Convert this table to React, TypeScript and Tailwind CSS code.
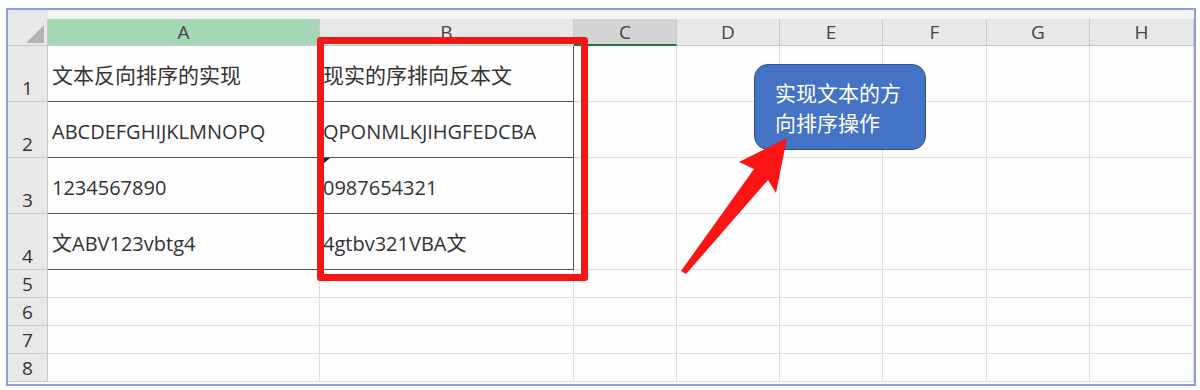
import React from 'react'

const cols = ['A', 'B', 'C', 'D', 'E', 'F', 'G', 'H']

const data: Record<number, [string, string]> = {
  1: ['文本反向排序的实现', '现实的序排向反本文'],
  2: ['ABCDEFGHIJKLMNOPQ', 'QPONMLKJIHGFEDCBA'],
  3: ['1234567890', '0987654321'],
  4: ['文ABV123vbtg4', '4gtbv321VBA文'],
}

const cellFont = { fontFamily: '"Open Sans", "Noto Sans CJK SC", sans-serif' }
const labelFont = { fontFamily: '"Open Sans", Arial, sans-serif' }

function headerClass(c: string) {
  if (c === 'A') return 'bg-[#a3d7b6] border-r border-b border-[#c9c9c9]'
  if (c === 'C') return 'bg-[#d4d4d4] border-r border-[#c9c9c9] border-b-2 border-b-[#217346]'
  return 'bg-[#e8e8e8] border-r border-b border-[#c9c9c9]'
}

export default function App() {
  const rows = [1, 2, 3, 4, 5, 6, 7, 8]
  return (
    <div className="relative w-[1200px] h-[390px] bg-white overflow-hidden">
      <div className="ml-[6px] mt-[8px] w-[1190px] h-[378px] border-2 border-[#8e9be3] bg-[#fdfdfe] flex flex-col">
        {/* top band */}
        <div className="h-[9px] flex">
          <div className="w-[40px] bg-[#e8e8e8]" />
          <div className="flex-1 bg-[#f4f4f6]" />
        </div>
        <div className="grid grid-cols-[40px_272px_254px_103px_103px_103px_104px_103px_104px] grid-rows-[27px_56px_56px_56px_56px_28px_28px_28px_28px]">
          {/* corner */}
          <div className="bg-[#e8e8e8] border-r border-b border-[#c9c9c9] relative">
            <svg className="absolute left-[18px] top-[6px]" width="18" height="18" viewBox="0 0 18 18">
              <polygon points="0,18 18,18 18,0" fill="#b3b3b3" />
            </svg>
          </div>
          {cols.map((c) => (
            <div
              key={c}
              className={`${headerClass(c)} flex items-center justify-center pt-[1px] text-[19px] text-[#444]`}
              style={labelFont}
            >
              {c}
            </div>
          ))}

          {rows.map((r) => {
            const d = data[r]
            return (
              <React.Fragment key={r}>
                <div
                  className="bg-[#e8e8e8] border-r border-b border-[#c9c9c9] flex items-end justify-center text-[19px] leading-[26px] text-[#333]"
                  style={labelFont}
                >
                  {r}
                </div>
                {cols.map((c, i) => {
                  const boxed = d && i < 2
                  const border = boxed
                    ? 'border-r border-b border-[#555]'
                    : 'border-r border-b border-[#dedede]'
                  const text = d && i < 2 ? d[i] : ''
                  const big = r === 1
                  return (
                    <div
                      key={c}
                      className={`${border} flex items-center pt-[4px] ${i === 0 ? 'pl-[4px]' : 'pl-[3px]'} ${big ? 'text-[21px]' : 'text-[20px]'} text-[#333] whitespace-nowrap overflow-hidden`}
                      style={cellFont}
                    >
                      {text}
                    </div>
                  )
                })}
              </React.Fragment>
            )
          })}
        </div>
      </div>

      {/* small indicator in B3 */}
      <svg className="absolute left-[323px] top-[158px]" width="7" height="6" viewBox="0 0 7 6">
        <polygon points="0,0 7,0 0,6" fill="#222" />
      </svg>

      {/* red highlight box */}
      <div className="absolute left-[317px] top-[37px] w-[271px] h-[244px] border-[7px] border-[#f51616] rounded-[3px]" />

      {/* callout */}
      <div
        className="absolute left-[754px] top-[64px] w-[172px] h-[86px] rounded-[14px] bg-[#4472c4] border border-[#2f528f] pl-[20px] pt-[12px] text-[21px] leading-[30px] text-white"
        style={{ fontFamily: '"Noto Sans CJK SC", sans-serif' }}
      >
        实现文本的方
        <br />
        向排序操作
      </div>

      {/* arrow */}
      <svg className="absolute left-0 top-0 pointer-events-none" width="1200" height="390" viewBox="0 0 1200 390">
        <polygon
          points="787,138 776,193 768,180 686,274 681,271 754,169 739,162"
          fill="#fb1414"
        />
      </svg>
    </div>
  )
}
